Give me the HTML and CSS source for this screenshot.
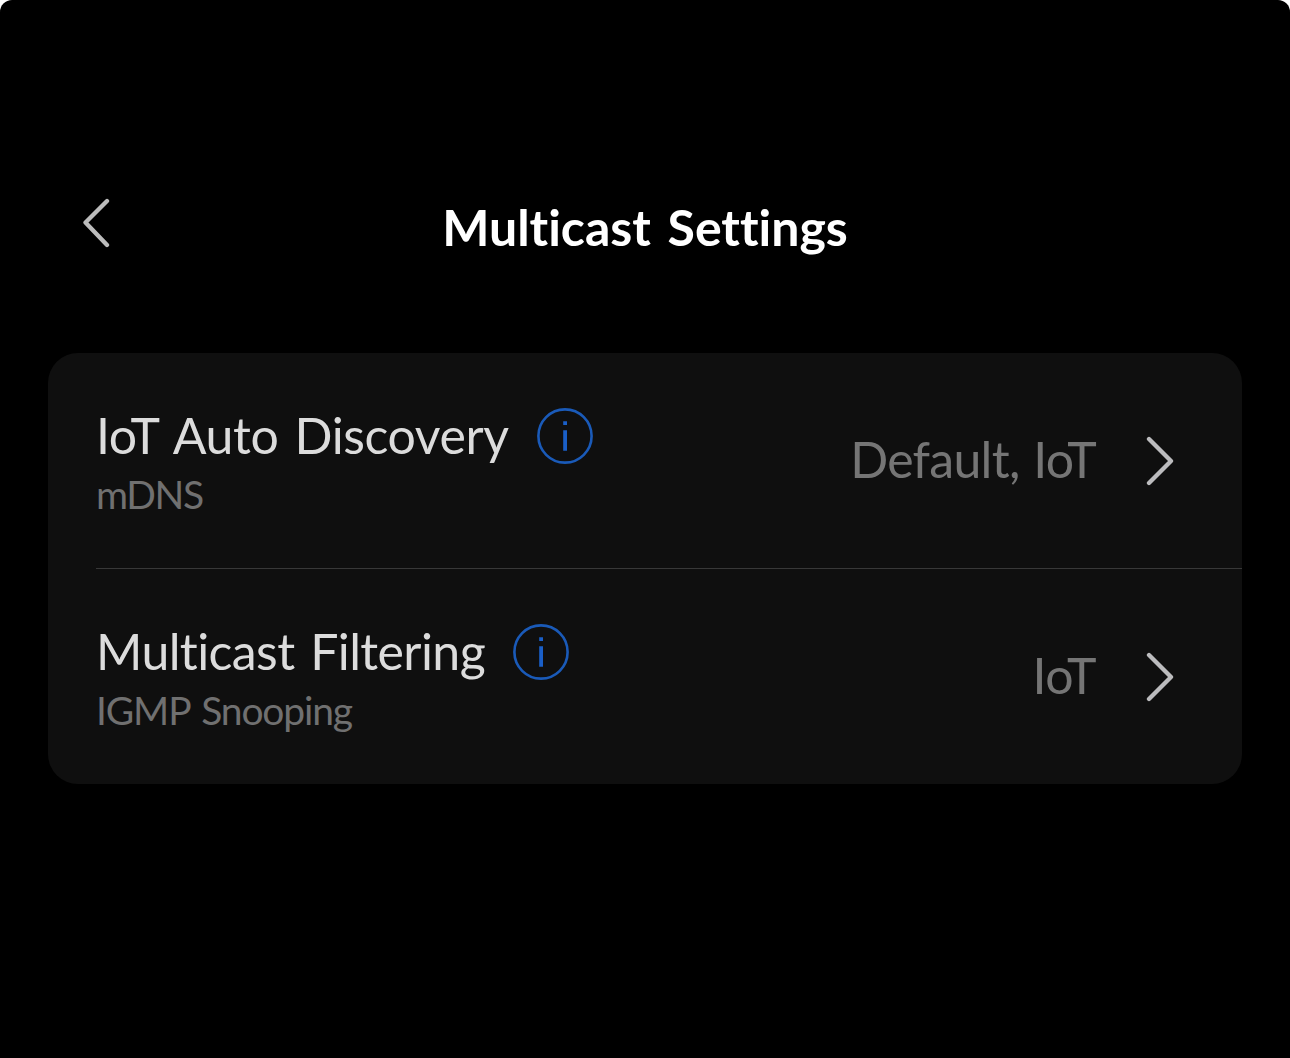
FILE: index.html
```html
<!DOCTYPE html>
<html lang="en">
<head>
<meta charset="utf-8">
<title>Multicast Settings</title>
<link rel="stylesheet" href="styles.css">
</head>
<body>
<main class="screen">
  <header class="header">
    <svg class="back" width="30" height="52" viewBox="0 0 30 52"><path d="M26 5 4.5 26.5 26 49"/></svg>
    <h1 class="title">Multicast Settings</h1>
  </header>
  <section class="card">
    <div class="row">
      <div class="info">
        <div class="heading">
          <span class="name name-discovery">IoT Auto Discovery</span>
          <svg class="info-icon" width="56" height="56" viewBox="0 0 56 56"><circle cx="28" cy="28" r="26.6"/><path d="M26.2 13.2h3.8v3.8h-3.8zM26.2 22.2h3.8v20.6h-3.8z"/></svg>
        </div>
        <div class="sub sub-mdns">mDNS</div>
      </div>
      <span class="value value-default">Default, IoT</span>
      <svg class="chevron" width="30" height="52" viewBox="0 0 30 52"><path d="M5 4 27 26 5 48"/></svg>
    </div>
    <div class="divider"></div>
    <div class="row">
      <div class="info">
        <div class="heading">
          <span class="name name-filtering">Multicast Filtering</span>
          <svg class="info-icon" width="56" height="56" viewBox="0 0 56 56"><circle cx="28" cy="28" r="26.6"/><path d="M26.2 13.2h3.8v3.8h-3.8zM26.2 22.2h3.8v20.6h-3.8z"/></svg>
        </div>
        <div class="sub sub-igmp">IGMP Snooping</div>
      </div>
      <span class="value value-iot">IoT</span>
      <svg class="chevron" width="30" height="52" viewBox="0 0 30 52"><path d="M5 4 27 26 5 48"/></svg>
    </div>
  </section>
</main>
</body>
</html>
```
FILE: styles.css
```css
* { box-sizing: border-box; }
body { margin: 0; background: #fff; font-family: Lato, "Liberation Sans", sans-serif; font-variant-ligatures: none; }
.screen {
  height: 1058px;
  padding: 196px 48px 0;
  background: #000;
  border-radius: 12px 12px 0 0;
}
.header {
  display: grid;
  grid-template-columns: 64px 1fr 64px;
  height: 157px;
}
.back { margin-left: 33px; fill: none; stroke: #bcbcbc; stroke-width: 4.3; stroke-linecap: round; stroke-linejoin: round; }
.title {
  margin: 0;
  color: #fff;
  font-size: 50px;
  font-weight: 700;
  line-height: 62px;
  text-align: center;
  white-space: nowrap;
  word-spacing: 4.5px;
}
.card { height: 431px; border-radius: 30px; background: #0f0f0f; overflow: hidden; }
.row { display: flex; height: 215px; padding: 51px 68px 0 48px; }
.info { flex: 1; }
.heading { display: flex; align-items: flex-end; height: 60px; }
.name { color: #dcdcdc; font-size: 50px; line-height: 58px; white-space: nowrap; }
.name-discovery { width: 441px; letter-spacing: -0.4px; word-spacing: 3.8px; }
.name-filtering { width: 417px; letter-spacing: -0.6px; word-spacing: 3.5px; }
.info-icon { flex: none; fill: #1a5fc8; }
.info-icon circle { fill: none; stroke: #1a5ab8; stroke-width: 2.6; }
.sub { margin-top: 6px; color: #707070; font-size: 39px; line-height: 48px; white-space: nowrap; }
.sub-mdns { letter-spacing: -1.4px; }
.sub-igmp { letter-spacing: -1.15px; word-spacing: 3px; }
.value { margin-top: 25px; color: #757575; font-size: 50px; line-height: 61px; white-space: nowrap; }
.value-default { letter-spacing: -0.7px; word-spacing: 1.5px; }
.value-iot { letter-spacing: -0.5px; }
.chevron { margin: 31px 0 0 48px; fill: none; stroke: #bcbcbe; stroke-width: 4.3; stroke-linecap: round; stroke-linejoin: round; }
.divider { height: 1px; margin-left: 48px; background: #383838; }
```
